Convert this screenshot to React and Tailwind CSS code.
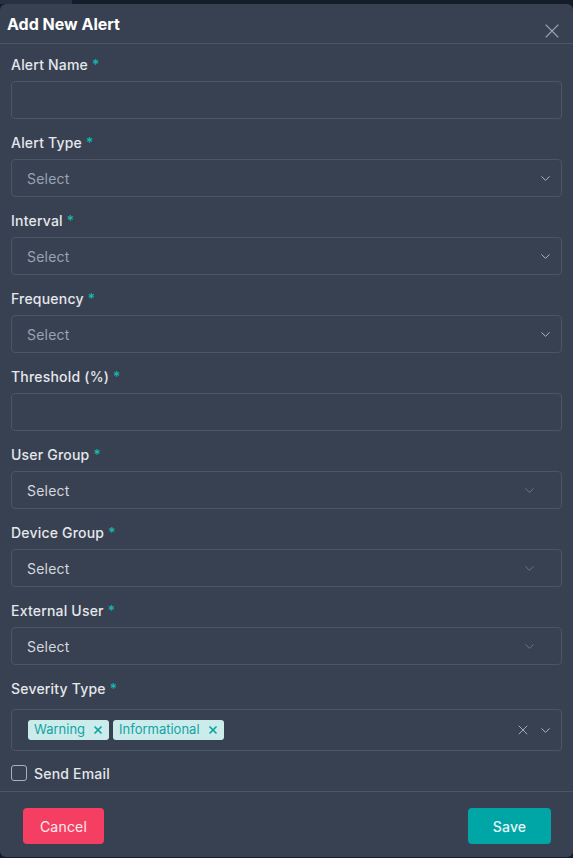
import { X, ChevronDown } from 'lucide-react'

const FONT = { fontFamily: 'Inter, "Noto Sans", sans-serif' }

function Label({ children }) {
  return (
    <div className="h-[20px] flex items-center text-[14px] font-medium text-[#e5e7eb] leading-[20px] tracking-[0.2px]">
      {children}
      <span className="ml-[4px] text-[#14b8b0]">*</span>
    </div>
  )
}

function TextInput() {
  return <div className="mt-[6px] h-[38px] rounded-[4px] border border-[#4b5565] bg-[#384152]" />
}

// two select styles: native-ish (placeholder) and react-select-ish (lighter text, inset chevron)
function Select({ variant = 'native' }) {
  const native = variant === 'native'
  return (
    <div className="mt-[6px] h-[38px] rounded-[4px] border border-[#4b5565] flex items-center pl-[15px]">
      <span className={`flex-1 text-[14px] tracking-[0.2px] ${native ? 'text-[#9aa2b0]' : 'text-[#d3d7de]'}`}>Select</span>
      {native ? (
        <ChevronDown className="mr-[8px] text-[#b7bcc6]" size={15} strokeWidth={1.5} />
      ) : (
        <ChevronDown className="mr-[24px] text-[#6f7787]" size={15} strokeWidth={1.5} />
      )}
    </div>
  )
}

function Chip({ children }) {
  return (
    <span className="h-[20px] flex items-center rounded-[3px] bg-[#ccecec] pl-[6px] pr-[5px] text-[13px] text-[#14a3a3]">
      {children}
      <X className="ml-[7px] text-[#14a3a3]" size={12} strokeWidth={3.4} />
    </span>
  )
}

function Field({ label, children }) {
  return (
    <div className="mb-[14px]">
      <Label>{label}</Label>
      {children}
    </div>
  )
}

export default function App() {
  return (
    <div className="w-[573px] h-[858px] bg-[#151d2b] flex flex-col" style={FONT}>
      <div className="h-[4px] flex shrink-0">
        <div className="w-[72px] bg-[#283142]" />
      </div>
      <div className="h-[853px] bg-[#384152] rounded-[6px] flex flex-col">
        <div className="h-[40px] border-b border-[#4b5565] flex items-start justify-between shrink-0">
          <h2 className="pl-[7px] pt-[10px] text-[16px] font-bold text-white leading-[20px]">Add New Alert</h2>
          <X className="mt-[15px] mr-[9px] text-[#9aa2b0]" size={24} strokeWidth={1.1} />
        </div>

        <div className="px-[11px] pt-[11px]">
          <Field label="Alert Name"><TextInput /></Field>
          <Field label="Alert Type"><Select /></Field>
          <Field label="Interval"><Select /></Field>
          <Field label="Frequency"><Select /></Field>
          <Field label="Threshold (%)"><TextInput /></Field>
          <Field label="User Group"><Select variant="rs" /></Field>
          <Field label="Device Group"><Select variant="rs" /></Field>
          <Field label="External User"><Select variant="rs" /></Field>

          <div>
            <Label>Severity Type</Label>
            <div className="mt-[10px] h-[42px] rounded-[4px] border border-[#4b5565] flex items-center pl-[16px]">
              <div className="flex-1 flex items-center gap-[4px]">
                <Chip>Warning</Chip>
                <Chip>Informational</Chip>
              </div>
              <X className="mr-[7px] text-[#a3aab5]" size={16} strokeWidth={1.5} />
              <ChevronDown className="mr-[8px] text-[#b7bcc6]" size={15} strokeWidth={1.5} />
            </div>
          </div>

          <label className="mt-[13px] flex items-center gap-[7px] h-[18px]">
            <span className="w-[16px] h-[16px] rounded-[3px] border border-[#aab0bb]" />
            <span className="text-[14px] font-medium text-[#e5e7eb] tracking-[0.2px]">Send Email</span>
          </label>
        </div>

        <div className="mt-[9px] border-t border-[#4b5565] flex justify-between pl-[23px] pr-[22px] pt-[16px]">
          <button className="w-[81px] h-[36px] rounded-[4px] bg-[#f43f62] text-[14px] text-white/90 tracking-[0.2px]">Cancel</button>
          <button className="w-[83px] h-[36px] rounded-[4px] bg-[#00a6a6] text-[14px] font-medium text-white/90 tracking-[0.2px]">Save</button>
        </div>
      </div>
    </div>
  )
}
